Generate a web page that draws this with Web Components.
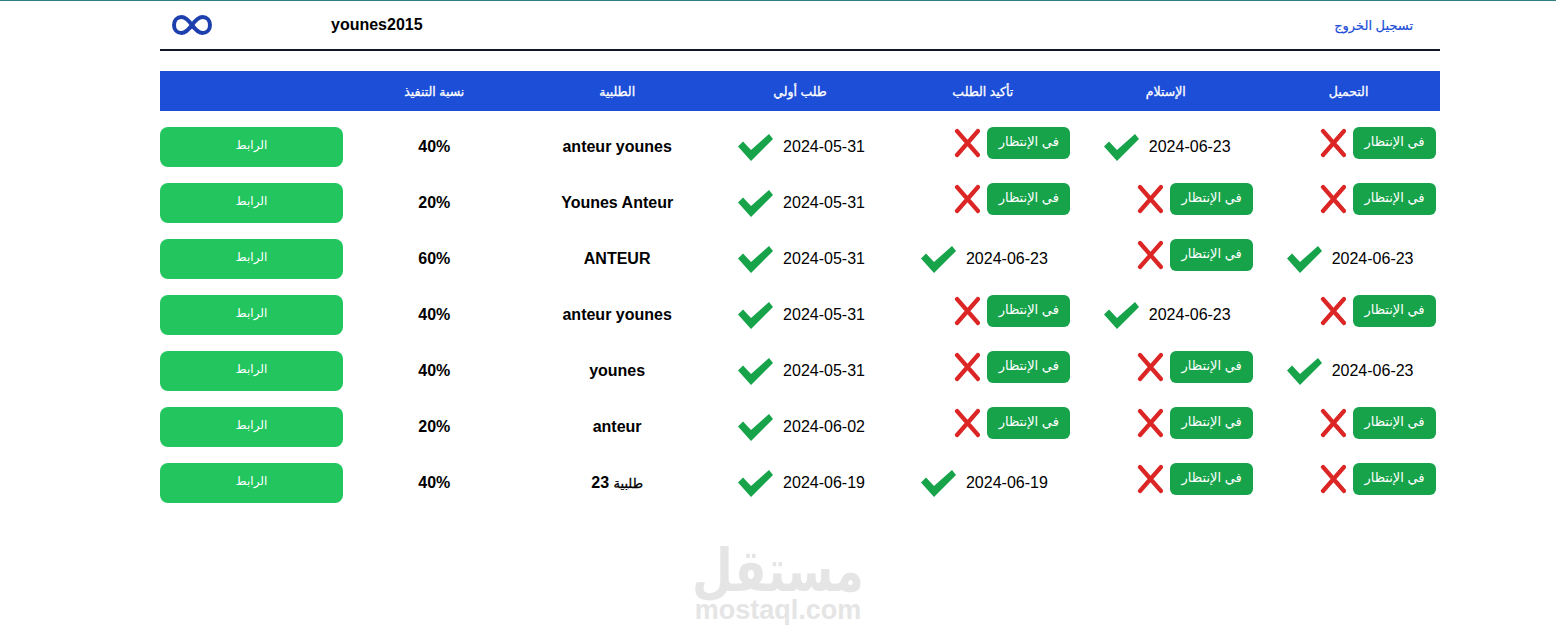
<!DOCTYPE html>
<html lang="ar">
<head>
<meta charset="utf-8">
<title>younes2015</title>
<style>
    html, body {
        margin: 0;
        padding: 0;
        background: white;
        font-family: "Liberation Sans", "DejaVu Sans", sans-serif;
        overflow: hidden;
    }
    body {
        border-top: 1px solid #2f7f86;
    }
    main {
        display: block;
        width: 1280px;
        margin-left: 160px;
    }
</style>
</head>
<body>
<main>
    <top-bar user="younes2015">تسجيل الخروج</top-bar>
    <orders-table></orders-table>
</main>
<site-mark></site-mark>

<script>
// Top bar with logo, user name and logout link
class TopBar extends HTMLElement {
    constructor() {
        super();
        this.attachShadow({ mode: 'open' });
    }

    connectedCallback() {
        this.shadowRoot.innerHTML = `
            <style>
                :host {
                    display: flex;
                    align-items: center;
                    height: 48px;
                    border-bottom: 2px solid #111827;
                    padding: 0 27px 0 12px;
                }
                svg {
                    width: 40px;
                    height: 20px;
                    flex: none;
                }
                .user {
                    margin-left: 119px;
                    font-size: 16px;
                    font-weight: bold;
                    color: black;
                }
                .logout {
                    margin-left: auto;
                    font-size: 13px;
                    color: #1d4ed8;
                    text-decoration: none;
                    -webkit-text-stroke: 0.2px #1d4ed8;
                }
            </style>
            <svg viewBox="0 0 40 20" fill="none" stroke="#1e40af" stroke-width="4">
                <path d="M20 10C16 4.500 13 2 9.500 2 5 2 2 5.500 2 10s3 8 7.500 8C13 18 16 15.500 20 10c4-5.500 7-8 10.500-8C35 2 38 5.500 38 10s-3 8-7.500 8C27 18 24 15.500 20 10z"/>
            </svg>
            <span class="user">${this.getAttribute('user')}</span>
            <a class="logout" href="#" dir="rtl"><slot></slot></a>
        `;
    }
}

// Waiting state: green label and red cross
class StatusPending extends HTMLElement {
    constructor() {
        super();
        this.attachShadow({ mode: 'open' });
    }

    connectedCallback() {
        this.shadowRoot.innerHTML = `
            <style>
                :host {
                    display: flex;
                    align-items: flex-start;
                    gap: 7px;
                    padding-right: 4px;
                }
                .label {
                    width: 83px;
                    height: 32px;
                    line-height: 30px;
                    text-align: center;
                    background: #16a34a;
                    border-radius: 6px;
                    color: white;
                    font-size: 13px;
                }
                svg {
                    width: 26px;
                    height: 32px;
                }
            </style>
            <span class="label">في الإنتظار</span>
            <svg viewBox="0 0 26 32" fill="none" stroke="#dc2626" stroke-width="4.200" stroke-linecap="round">
                <path d="M3 4L24 28M24 4L3 28"/>
            </svg>
        `;
    }
}

// Finished state: date with green tick
class StatusDone extends HTMLElement {
    constructor() {
        super();
        this.attachShadow({ mode: 'open' });
    }

    connectedCallback() {
        this.shadowRoot.innerHTML = `
            <style>
                :host {
                    display: flex;
                    align-items: center;
                    justify-content: center;
                    gap: 10px;
                    height: 40px;
                    padding-left: 3px;
                    font-size: 16px;
                    color: black;
                }
                svg {
                    width: 35px;
                    height: 27px;
                }
            </style>
            <span dir="ltr">${this.getAttribute('date')}</span>
            <svg viewBox="0 0 35 27" fill="#16a34a">
                <polygon points="0,12.500 5,7.500 13,16 31,0 35,5 13,27"/>
            </svg>
        `;
    }
}

// Main table, columns run right to left
class OrdersTable extends HTMLElement {
    constructor() {
        super();
        this.attachShadow({ mode: 'open' });
        this.rows = [
            { load: '', recv: '2024-06-23', confirm: '', first: '2024-05-31', name: 'anteur younes', pct: '40%' },
            { load: '', recv: '', confirm: '', first: '2024-05-31', name: 'Younes Anteur', pct: '20%' },
            { load: '2024-06-23', recv: '', confirm: '2024-06-23', first: '2024-05-31', name: 'ANTEUR', pct: '60%' },
            { load: '', recv: '2024-06-23', confirm: '', first: '2024-05-31', name: 'anteur younes', pct: '40%' },
            { load: '2024-06-23', recv: '', confirm: '', first: '2024-05-31', name: 'younes', pct: '40%' },
            { load: '', recv: '', confirm: '', first: '2024-06-02', name: 'anteur', pct: '20%' },
            { load: '', recv: '', confirm: '2024-06-19', first: '2024-06-19', name: '<span class="ar">طلبية</span> 23', pct: '40%' }
        ];
    }

    statusCell(date) {
        return date
            ? `<status-done date="${date}"></status-done>`
            : `<status-pending></status-pending>`;
    }

    connectedCallback() {
        const rows = this.rows.map(r => `
            <div class="row">
                ${this.statusCell(r.load)}
                ${this.statusCell(r.recv)}
                ${this.statusCell(r.confirm)}
                ${this.statusCell(r.first)}
                <div class="strong">${r.name}</div>
                <div class="strong">${r.pct}</div>
                <a class="link" href="#">الرابط</a>
            </div>
        `).join('');

        this.shadowRoot.innerHTML = `
            <style>
                :host {
                    display: block;
                    margin-top: 20px;
                    direction: rtl;
                }
                .row, .head {
                    display: grid;
                    grid-template-columns: repeat(7, 1fr);
                    height: 40px;
                    align-items: center;
                    margin-bottom: 16px;
                }
                .head {
                    background: #1d4ed8;
                    color: white;
                    font-size: 12.500px;
                    -webkit-text-stroke: 0.3px white;
                    text-align: center;
                }
                status-pending {
                    align-self: start;
                }
                .strong {
                    text-align: center;
                    font-size: 16px;
                    font-weight: bold;
                    color: black;
                }
                .ar {
                    font-size: 13px;
                    font-weight: normal;
                    -webkit-text-stroke: 0.3px black;
                }
                .link {
                    height: 40px;
                    line-height: 37px;
                    text-align: center;
                    background: #22c55e;
                    border-radius: 8px;
                    color: white;
                    font-size: 12px;
                    text-decoration: none;
                }
            </style>
            <div class="head">
                <span>التحميل</span>
                <span>الإستلام</span>
                <span>تأكيد الطلب</span>
                <span>طلب أولي</span>
                <span>الطلبية</span>
                <span>نسبة التنفيذ</span>
                <span></span>
            </div>
            ${rows}
        `;
    }
}

// Faint site mark under the table
class SiteMark extends HTMLElement {
    constructor() {
        super();
        this.attachShadow({ mode: 'open' });
    }

    connectedCallback() {
        this.shadowRoot.innerHTML = `
            <style>
                :host {
                    display: flex;
                    flex-direction: column;
                    align-items: center;
                    margin-top: 44px;
                    color: #e5e5e5;
                    font-weight: bold;
                }
                .ar {
                    font-family: "DejaVu Sans", sans-serif;
                    font-size: 47px;
                    line-height: 48px;
                    transform: scaleY(1.250);
                }
                .en {
                    font-family: "Liberation Sans", sans-serif;
                    font-size: 27px;
                    line-height: 30px;
                }
            </style>
            <span class="ar" dir="rtl">مستقل</span>
            <span class="en">mostaql.com</span>
        `;
    }
}

customElements.define('top-bar', TopBar);
customElements.define('status-pending', StatusPending);
customElements.define('status-done', StatusDone);
customElements.define('orders-table', OrdersTable);
customElements.define('site-mark', SiteMark);
</script>
</body>
</html>
